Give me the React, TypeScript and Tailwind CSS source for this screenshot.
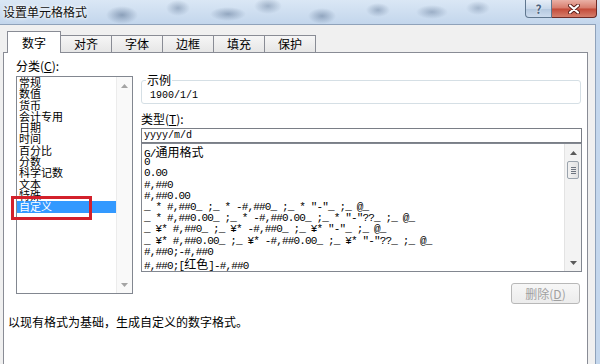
import React from "react";

const categories = ["常规", "数值", "货币", "会计专用", "日期", "时间", "百分比", "分数", "科学记数", "文本", "特殊", "自定义"];

const formats: React.ReactNode[] = [
  <>G/<span className="font-['Noto_Sans_CJK_SC',sans-serif] text-[12px] tracking-normal">通用格式</span></>,
  "0",
  "0.00",
  "#,##0",
  "#,##0.00",
  '_ * #,##0_ ;_ * -#,##0_ ;_ * "-"_ ;_ @_',
  '_ * #,##0.00_ ;_ * -#,##0.00_ ;_ * "-"??_ ;_ @_',
  '_ ¥* #,##0_ ;_ ¥* -#,##0_ ;_ ¥* "-"_ ;_ @_',
  '_ ¥* #,##0.00_ ;_ ¥* -#,##0.00_ ;_ ¥* "-"??_ ;_ @_',
  "#,##0;-#,##0",
  <>#,##0;[<span className="font-['Noto_Sans_CJK_SC',sans-serif] text-[12px] tracking-normal">红色</span>]-#,##0</>,
];

function UpArrow({ color }: { color: string }) {
  return (
    <svg width="7" height="4" viewBox="0 0 7 4">
      <path d="M0 4 L3.5 0 L7 4 Z" fill={color} />
    </svg>
  );
}

function DownArrow({ color }: { color: string }) {
  return (
    <svg width="7" height="4" viewBox="0 0 7 4">
      <path d="M0 0 L3.5 4 L7 0 Z" fill={color} />
    </svg>
  );
}

export default function App() {
  return (
    <div className="relative w-[600px] h-[364px] overflow-hidden bg-[#c4d7ed] flex flex-col font-['Noto_Sans_CJK_SC',sans-serif] text-black">
      {/* Title bar */}
      <div className="h-[24px] shrink-0 flex items-start justify-between bg-[image:radial-gradient(ellipse_16px_9px_at_122px_15px,rgba(60,85,120,0.45),transparent),radial-gradient(ellipse_12px_8px_at_178px_8px,rgba(60,85,120,0.35),transparent),radial-gradient(ellipse_18px_7px_at_228px_14px,rgba(60,85,120,0.4),transparent),radial-gradient(ellipse_14px_8px_at_268px_6px,rgba(60,85,120,0.35),transparent),radial-gradient(ellipse_14px_8px_at_322px_16px,rgba(60,85,120,0.4),transparent),radial-gradient(ellipse_12px_7px_at_378px_10px,rgba(60,85,120,0.35),transparent),radial-gradient(ellipse_16px_7px_at_432px_12px,rgba(60,85,120,0.35),transparent),radial-gradient(ellipse_12px_7px_at_478px_8px,rgba(60,85,120,0.3),transparent),linear-gradient(180deg,#dae7f5,#c3d6ec)]">
        <div className="pl-[3px] pt-[4px] text-[12px] leading-[16px] text-[#111] [text-shadow:0_0_5px_#fff,0_0_3px_#fff]">设置单元格格式</div>
        <div className="flex mr-[3px]">
          <div className="w-[27px] h-[18px] border border-t-0 border-[#60778f] rounded-bl-[4px] bg-[linear-gradient(180deg,#e6eef7,#c9d8ea_50%,#b4c8df_52%,#cddcee)] flex items-center justify-center text-[12px] leading-[12px] font-bold text-[#4c6380] [text-shadow:0_0_2px_#fff]">
            ?
          </div>
          <div className="w-[45px] h-[18px] border border-t-0 border-l-0 border-[#6d2a25] rounded-br-[4px] bg-[linear-gradient(180deg,#eab1a6,#d77b6b_48%,#c34a38_52%,#d57f6c)] flex items-center justify-center">
            <svg width="12" height="10" viewBox="0 0 12 10">
              <path d="M2 1.5 L10 8.5 M10 1.5 L2 8.5" stroke="#5a1f1a" strokeWidth="4" strokeLinecap="round" />
              <path d="M2 1.5 L10 8.5 M10 1.5 L2 8.5" stroke="#ffffff" strokeWidth="2.2" strokeLinecap="round" />
            </svg>
          </div>
        </div>
      </div>

      {/* Client area */}
      <div className="flex-1 mr-[4px] bg-[#f0f0f0] border-t border-r border-[#8fa2ba] flex flex-col pl-[3px] pr-[7px]">
        {/* Tabs */}
        <div className="h-[27px] shrink-0 flex items-end pl-[4px] text-[12px]">
          <div className="relative z-10 w-[54px] h-[22px] -mb-px border border-b-0 border-[#898c95] bg-white flex items-center justify-center leading-[14px]">
            数字
          </div>
          {["对齐", "字体", "边框", "填充", "保护"].map((t) => (
            <div
              key={t}
              className="w-[52px] h-[17px] -ml-px border border-b-0 border-[#898c95] bg-[linear-gradient(180deg,#f6f6f6,#e6e6e6)] flex items-center justify-center leading-[14px]"
            >
              {t}
            </div>
          ))}
        </div>

        {/* Panel */}
        <div className="flex-1 border border-b-0 border-[#898c95] bg-white flex flex-col">
          <div className="flex">
            {/* Left column */}
            <div className="ml-[12px] w-[117px] pt-[6px] flex flex-col">
              <div className="text-[12px] leading-[14px]">
                分类(<span className="underline">C</span>):
              </div>
              <div className="mt-[3px] h-[218px] border border-[#828790] flex">
                <div className="flex-1 flex flex-col">
                  {categories.map((c) => (
                    <div
                      key={c}
                      className={
                        c === "自定义"
                          ? "h-[11.3px] leading-[11.3px] text-[11px] pl-[2px] bg-[#3399ff] text-white whitespace-nowrap"
                          : "h-[11.3px] leading-[11.3px] text-[11px] pl-[2px] whitespace-nowrap"
                      }
                    >
                      {c}
                    </div>
                  ))}
                </div>
                <div className="w-[16px] bg-[#f9f9f9] border-l border-[#ececec] flex flex-col justify-between">
                  <div className="h-[17px] flex items-center justify-center">
                    <UpArrow color="#a4a4a4" />
                  </div>
                  <div className="h-[17px] flex items-center justify-center">
                    <DownArrow color="#a4a4a4" />
                  </div>
                </div>
              </div>
            </div>

            {/* Right column */}
            <div className="ml-[8px] w-[441px] flex flex-col">
              <fieldset className="mt-[20px] mr-[1px] border border-[#d5dfe5] rounded-[3px] px-[8px] pb-[1px]">
                <legend className="text-[12px] leading-[14px] px-[1px] -ml-[4px]">示例</legend>
                <div className="pt-[3px] text-[10px] leading-[12px] font-['Liberation_Mono',monospace]">1900/1/1</div>
              </fieldset>
              <div className="mt-[8px] text-[12px] leading-[14px]">
                类型(<span className="underline">T</span>):
              </div>
              <div className="mt-[2px] h-[15px] border border-[#7a7e86] bg-white pl-[2px] text-[10px] leading-[13px] font-['Liberation_Mono',monospace]">
                yyyy/m/d
              </div>
              <div className="h-[129px] border border-[#828790] flex">
                <div className="flex-1 pt-[2px] pl-[2px] overflow-hidden font-['Liberation_Mono',monospace] text-[11px] tracking-[-0.85px]">
                  {formats.map((f, i) => (
                    <div key={i} className="h-[11.2px] leading-[11.2px] whitespace-pre">
                      {f}
                    </div>
                  ))}
                </div>
                <div className="w-[17px] bg-[#f3f3f3] border-l border-[#e3e3e3] flex flex-col">
                  <div className="h-[17px] flex items-center justify-center">
                    <UpArrow color="#5a5a5a" />
                  </div>
                  <div className="mx-[2px] h-[18px] border border-[#9aa3ad] rounded-[2px] bg-[linear-gradient(90deg,#f2f2f2,#e2e2e2)] flex flex-col items-center justify-center gap-[1px]">
                    <div className="w-[5px] h-px bg-[#6e7580]" />
                    <div className="w-[5px] h-px bg-[#6e7580]" />
                    <div className="w-[5px] h-px bg-[#6e7580]" />
                    <div className="w-[5px] h-px bg-[#6e7580]" />
                  </div>
                  <div className="flex-1" />
                  <div className="h-[17px] flex items-center justify-center">
                    <DownArrow color="#5a5a5a" />
                  </div>
                </div>
              </div>
              <div className="mt-[11px] mr-[2px] self-end w-[69px] h-[21px] border border-[#b8b8b8] rounded-[3px] bg-[linear-gradient(180deg,#f7f7f7,#ececec)] flex items-center justify-center text-[12px] leading-[14px] text-[#a0a0a0]">
                删除(<span className="underline">D</span>)
              </div>
            </div>
          </div>

          <div className="mt-[11px] ml-[4px] text-[12px] leading-[14px]">以现有格式为基础，生成自定义的数字格式。</div>
        </div>
      </div>

      {/* Red annotation box */}
      <div className="absolute left-[11px] top-[196px] w-[81px] h-[24px] border-[3px] border-[#d3202b]" />
    </div>
  );
}
